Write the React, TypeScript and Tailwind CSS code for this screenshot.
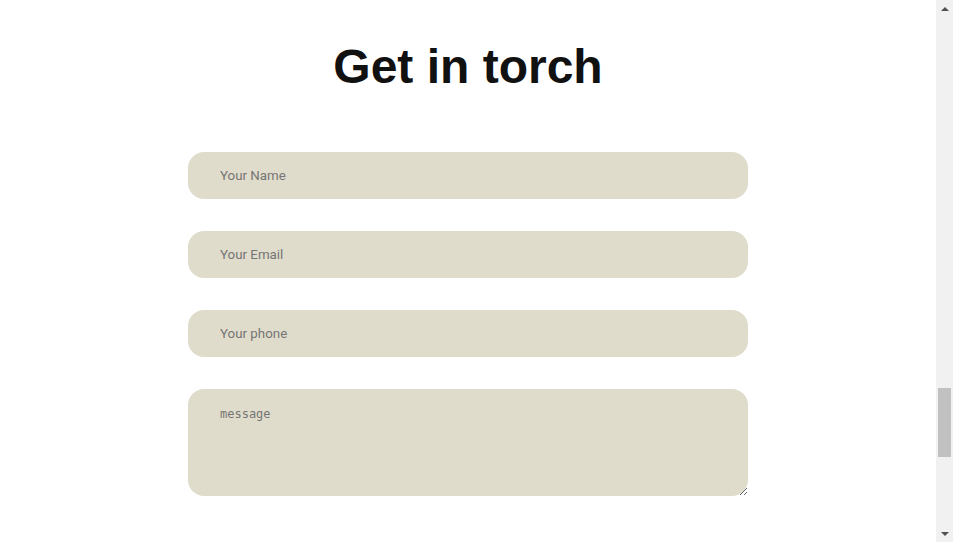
export default function App() {
  return (
    <div className="flex h-[542px] w-[953px] overflow-hidden bg-white">
      <main className="flex flex-1 flex-col items-center pt-[39px]">
        <h1 className="font-['Liberation_Sans',Arial,sans-serif] text-[48px] font-bold leading-[56px] text-[#111111]">
          Get in torch
        </h1>
        <form className="mt-[57px] flex w-[560px] flex-col gap-[32px]">
          <input
            type="text"
            placeholder="Your Name"
            className="h-[47px] w-full rounded-2xl bg-[#e0dccb] px-8 font-['Roboto',Arial,sans-serif] text-[13.333px] text-[#333] outline-none placeholder:text-[#757575]"
          />
          <input
            type="email"
            placeholder="Your Email"
            className="h-[47px] w-full rounded-2xl bg-[#e0dccb] px-8 font-['Roboto',Arial,sans-serif] text-[13.333px] text-[#333] outline-none placeholder:text-[#757575]"
          />
          <input
            type="tel"
            placeholder="Your phone"
            className="h-[47px] w-full rounded-2xl bg-[#e0dccb] px-8 font-['Roboto',Arial,sans-serif] text-[13.333px] text-[#333] outline-none placeholder:text-[#757575]"
          />
          <textarea
            placeholder="message"
            className="h-[107px] w-full rounded-2xl bg-[#e0dccb] px-8 pt-[16px] font-['DejaVu_Sans_Mono',monospace] text-[12px] text-[#333] outline-none placeholder:text-[#757575]"
          />
        </form>
      </main>

      {/* scrollbar */}
      <div className="flex w-[17px] flex-col items-center bg-[#f1f1f1]">
        <div className="flex h-[17px] items-center justify-center">
          <div className="h-0 w-0 border-x-4 border-b-4 border-x-transparent border-b-[#505050]" />
        </div>
        <div className="mt-[371px] h-[69px] w-[13px] bg-[#c1c1c1]" />
        <div className="flex-1" />
        <div className="flex h-[17px] items-center justify-center">
          <div className="h-0 w-0 border-x-4 border-t-4 border-x-transparent border-t-[#505050]" />
        </div>
      </div>
    </div>
  );
}
